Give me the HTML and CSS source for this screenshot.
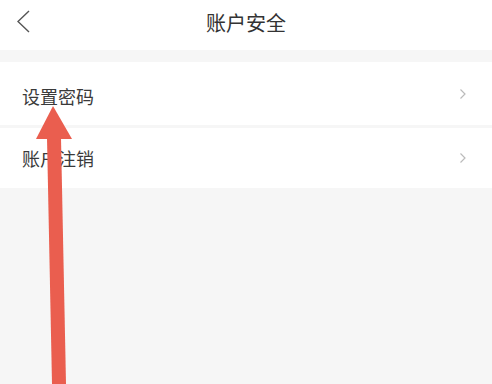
FILE: index.html
```html
<!DOCTYPE html>
<html lang="zh">
<head>
  <meta charset="UTF-8">
  <title>账户安全</title>
  <meta name="viewport" content="width=device-width, initial-scale=1">
  <link rel="stylesheet" href="styles.css">
</head>
<body>
  <div class="page">
    <div class="header">
      <svg class="back" width="14" height="24" viewBox="0 0 14 24">
        <polyline points="12,1 1,11.5 12,22" fill="none" stroke="#555" stroke-width="1.4"/>
      </svg>
      <h1 class="title">账户安全</h1>
    </div>
    <div class="list">
      <div class="row">
        <span class="row__label">设置密码</span>
        <svg class="row__arrow" width="8" height="12" viewBox="0 0 8 12">
          <polyline points="1.5,1.5 6,6 1.5,10.5" fill="none" stroke="#bbb" stroke-width="1.2"/>
        </svg>
      </div>
      <div class="row">
        <span class="row__label">账户注销</span>
        <svg class="row__arrow" width="8" height="12" viewBox="0 0 8 12">
          <polyline points="1.5,1.5 6,6 1.5,10.5" fill="none" stroke="#bbb" stroke-width="1.2"/>
        </svg>
      </div>
    </div>
    <svg class="pointer" width="492" height="384" viewBox="0 0 492 384">
      <polygon points="47,138 61,138 66,384 52,384" fill="#ea5e4f"/>
      <polygon points="53,106 72,139 36,139" fill="#ea5e4f"/>
    </svg>
  </div>
</body>
</html>
```

FILE: styles.css
```css
body {
  margin: 0;
  font-family: "Noto Sans CJK SC", "Noto Sans", sans-serif;
  background-color: #f6f6f6;
}
.page {
  position: relative;
  width: 492px;
  height: 384px;
  overflow: hidden;
}
.header {
  height: 50px;
  background-color: #fff;
  display: flex;
  align-items: center;
  justify-content: center;
  position: relative;
}
.back {
  position: absolute;
  left: 17px;
  top: 10px;
}
.title {
  margin: 0;
  font-size: 20px;
  font-weight: normal;
  color: #333;
  margin-top: -5px;
}
.list {
  margin-top: 12px;
  display: flex;
  flex-direction: column;
  gap: 3px;
}
.row {
  height: 63px;
  background-color: #fff;
  display: flex;
  align-items: center;
  justify-content: space-between;
  padding: 0 25px 0 22px;
}
.row + .row {
  height: 60px;
}
.row__label {
  font-size: 18px;
  color: #3a3a3a;
  margin-top: 4px;
}
.row:nth-child(2) .row__label {
  margin-top: 0;
}
.pointer {
  position: absolute;
  left: 0;
  top: 0;
}
```
